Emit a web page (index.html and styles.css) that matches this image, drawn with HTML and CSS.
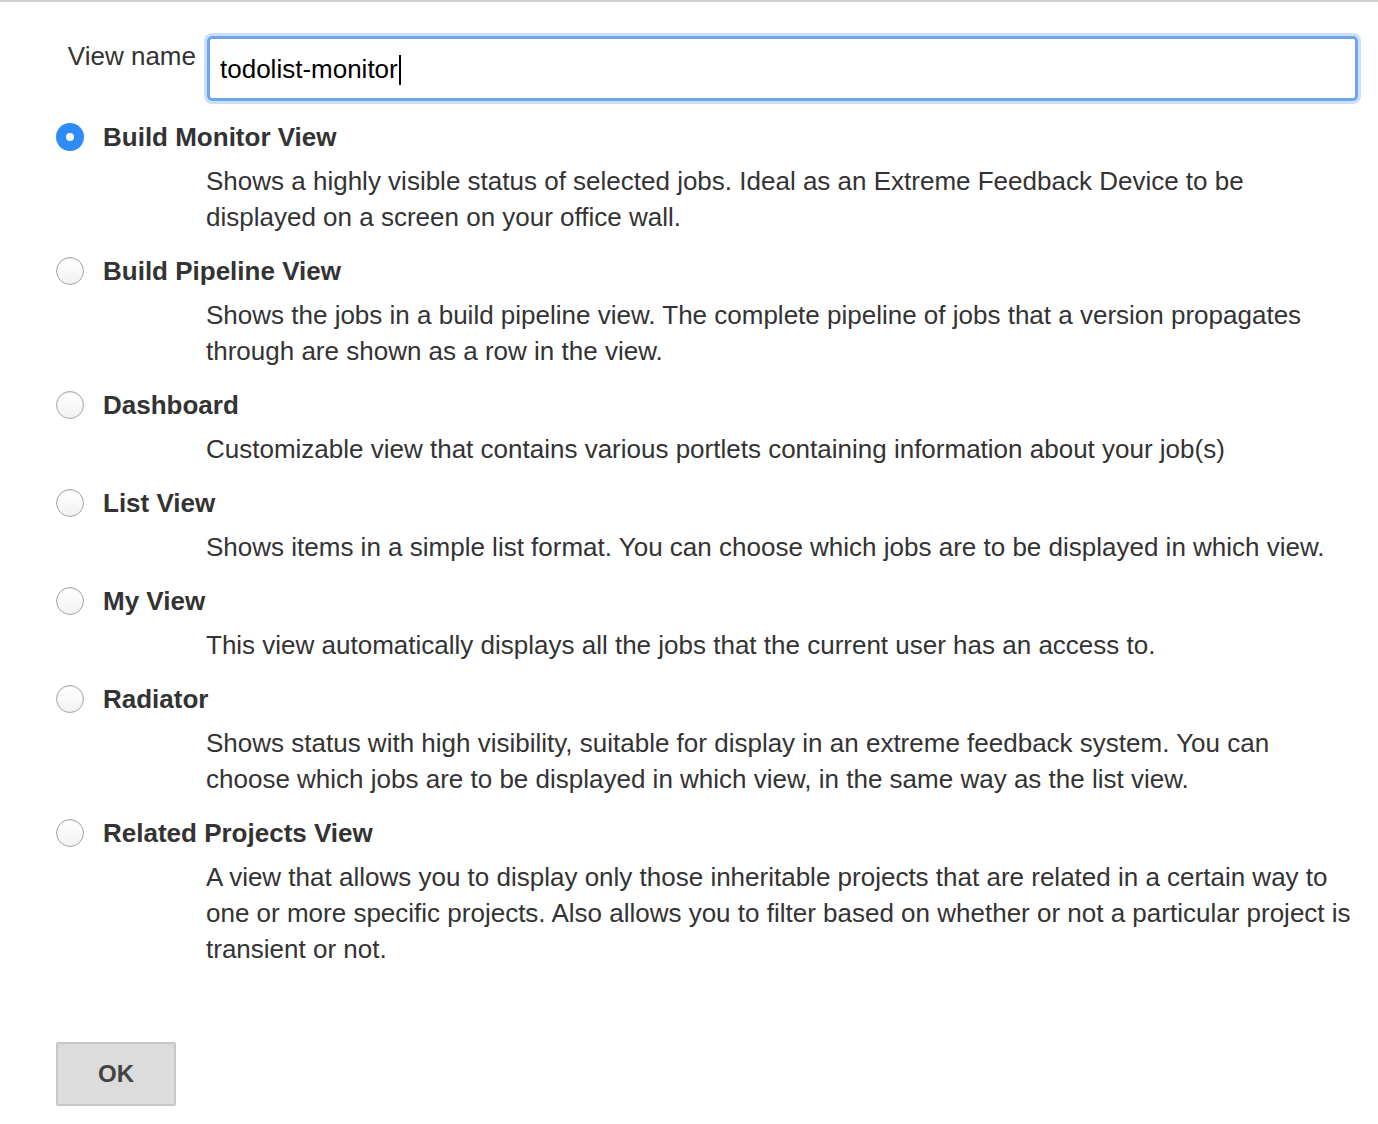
FILE: index.html
```html
<!DOCTYPE html>
<html>
<head>
<meta charset="utf-8">
<link rel="stylesheet" href="styles.css">
</head>
<body>
<div class="page">
  <form class="form">
    <div class="name-row">
      <label class="name-label" for="vn">View name</label>
      <div class="name-input"><span class="typed">todolist-monitor</span><span class="caret"></span></div>
    </div>

    <div class="option">
      <div class="opt-head"><span class="radio checked"></span><span class="opt-title">Build Monitor View</span></div>
      <div class="opt-desc">Shows a highly visible status of selected jobs. Ideal as an Extreme Feedback Device to be displayed on a screen on your office wall.</div>
    </div>
    <div class="option">
      <div class="opt-head"><span class="radio"></span><span class="opt-title">Build Pipeline View</span></div>
      <div class="opt-desc">Shows the jobs in a build pipeline view. The complete pipeline of jobs that a version propagates through are shown as a row in the view.</div>
    </div>
    <div class="option">
      <div class="opt-head"><span class="radio"></span><span class="opt-title">Dashboard</span></div>
      <div class="opt-desc">Customizable view that contains various portlets containing information about your job(s)</div>
    </div>
    <div class="option">
      <div class="opt-head"><span class="radio"></span><span class="opt-title">List View</span></div>
      <div class="opt-desc">Shows items in a simple list format. You can choose which jobs are to be displayed in which view.</div>
    </div>
    <div class="option">
      <div class="opt-head"><span class="radio"></span><span class="opt-title">My View</span></div>
      <div class="opt-desc">This view automatically displays all the jobs that the current user has an access to.</div>
    </div>
    <div class="option">
      <div class="opt-head"><span class="radio"></span><span class="opt-title">Radiator</span></div>
      <div class="opt-desc">Shows status with high visibility, suitable for display in an extreme feedback system. You can choose which jobs are to be displayed in which view, in the same way as the list view.</div>
    </div>
    <div class="option">
      <div class="opt-head"><span class="radio"></span><span class="opt-title">Related Projects View</span></div>
      <div class="opt-desc">A view that allows you to display only those inheritable projects that are related in a certain way to one or more specific projects. Also allows you to filter based on whether or not a particular project is transient or not.</div>
    </div>

    <div class="actions">
      <button type="button" class="ok">OK</button>
    </div>
  </form>
</div>
</body>
</html>
```

FILE: styles.css
```css
html, body {
  margin: 0;
  padding: 0;
  background: #fff;
}
body {
  font-family: "Liberation Sans", Arial, Helvetica, sans-serif;
  color: #333;
  font-size: 26px;
}
.page {
  border-top: 2px solid #d2d2cc;
  min-height: 1122px;
}
.form {
  padding: 34px 22px 0 56px;
  width: 1378px;
  box-sizing: border-box;
}
.name-row {
  display: flex;
  align-items: flex-start;
}
.name-label {
  width: 140px;
  flex: none;
  text-align: right;
  line-height: 36px;
  padding-top: 2px;
  color: #333;
}
.name-input {
  margin-left: 11px;
  width: 1151px;
  flex: none;
  height: 65px;
  box-sizing: border-box;
  border: 3px solid #6ea6ee;
  border-radius: 5px;
  box-shadow: 0 0 0 3px #cde0f9;
  display: flex;
  align-items: center;
  padding: 2px 0 0 10px;
  color: #000;
  font-size: 26px;
}
.caret {
  display: inline-block;
  width: 2px;
  height: 30px;
  background: #000;
  margin-left: 1px;
}
.option {
  margin-top: 18px;
}
.name-row + .option {
  margin-top: 18px;
}
.opt-head {
  display: flex;
  align-items: center;
  height: 36px;
}
.radio {
  width: 28px;
  height: 28px;
  box-sizing: border-box;
  border-radius: 50%;
  border: 1px solid #a6a6a6;
  background: linear-gradient(#fff, #f2f2f2);
  box-shadow: inset 0 1px 1px rgba(0,0,0,0.08);
  position: relative;
  flex: none;
}
.radio.checked {
  border: none;
  background: #2f8cf7;
  box-shadow: none;
}
.radio.checked::after {
  content: "";
  position: absolute;
  left: 10px;
  top: 10px;
  width: 8px;
  height: 8px;
  border-radius: 50%;
  background: #fff;
}
.opt-title {
  margin-left: 19px;
  font-weight: bold;
  color: #333;
}
.opt-desc {
  margin-top: 8px;
  padding-left: 150px;
  line-height: 36px;
  color: #333;
}
.actions {
  margin-top: 75px;
}
.ok {
  width: 120px;
  height: 64px;
  background: #dcdcdc;
  border: 2px solid #c6c6c6;
  border-radius: 2px;
  font-family: "Liberation Sans", Arial, Helvetica, sans-serif;
  font-weight: bold;
  font-size: 24px;
  color: #444;
  padding: 0;
}
```
